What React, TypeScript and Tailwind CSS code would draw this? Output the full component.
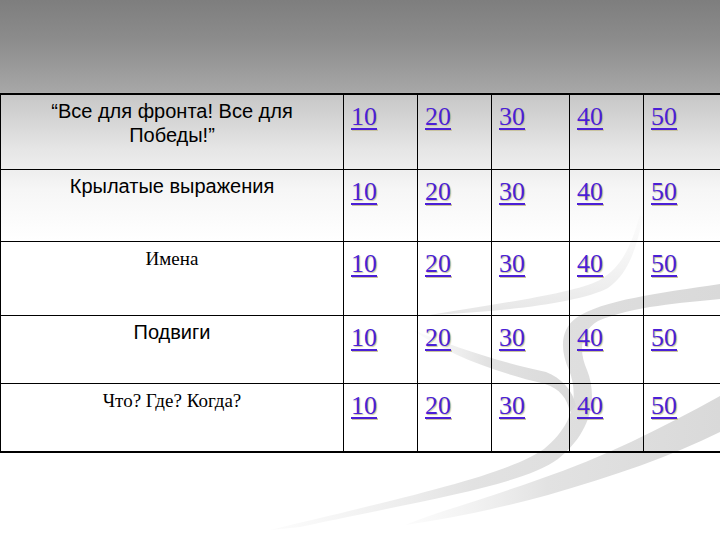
import React from 'react';

// Quiz board slide: category column plus five point-value links per row.
const rows = [
  { label: '“Все для фронта! Все для Победы!”', font: 'sans' },
  { label: 'Крылатые выражения', font: 'sans' },
  { label: 'Имена', font: 'serif' },
  { label: 'Подвиги', font: 'sans' },
  { label: 'Что? Где? Когда?', font: 'serif' },
];

const points = [10, 20, 30, 40, 50];
const heights = ['h-[75px]', 'h-[72px]', 'h-[74px]', 'h-[68px]', 'h-[69px]'];

function Swoosh() {
  // Template decoration in the lower right — pale grey ribbons.
  return (
    <svg
      aria-hidden
      className="absolute inset-0 pointer-events-none"
      width="720"
      height="540"
      viewBox="0 0 720 540"
    >
      <defs>
        <linearGradient id="rib" x1="0" y1="0" x2="1" y2="0">
          <stop offset="0" stopColor="#eeeeee" stopOpacity="0.2" />
          <stop offset="0.45" stopColor="#e2e2e2" />
          <stop offset="1" stopColor="#d9d9d9" />
        </linearGradient>
        <linearGradient id="thin" x1="0" y1="1" x2="0" y2="0">
          <stop offset="0" stopColor="#e6e6e6" />
          <stop offset="1" stopColor="#f4f4f4" stopOpacity="0.3" />
        </linearGradient>
      </defs>
      <path
        d="M430,315 C500,303 572,294 600,280 C620,268 630,250 640,215 L643,217 C636,250 628,274 608,288 C580,303 500,312 430,315 Z"
        fill="url(#thin)"
      />
      <path
        d="M720,284 C660,293 602,300 576,318 C560,330 560,350 569,370 C579,395 574,425 544,449 C508,474 420,494 270,530 L300,527 C430,499 522,485 558,459 C594,430 597,395 587,370 C578,350 581,331 598,321 C633,306 682,303 720,299 Z"
        fill="url(#rib)"
      />
      <path
        d="M413,330 C445,352 486,370 545,384 C560,389 567,398 570,412 L576,406 C573,390 561,378 546,372 C492,360 452,346 413,330 Z"
        fill="url(#rib)"
      />
      <path
        d="M720,396 C662,428 602,458 540,479 C490,497 440,511 405,525 C452,518 502,508 548,495 C614,476 672,456 720,432 Z"
        fill="url(#rib)"
      />
    </svg>
  );
}

export default function App() {
  return (
    <div className="relative w-[720px] h-[540px] overflow-hidden bg-[linear-gradient(180deg,#7e7e7e_0px,#8c8c8c_40px,#a7a7a7_92px,#c7c7c7_95px,#e6e6e6_150px,#f6f6f6_190px,#ffffff_240px)]">
      <Swoosh />
      <div className="relative pt-[93px]">
        <table className="w-[720px] border-collapse table-fixed border-y-2 border-black">
          <colgroup>
            <col className="w-[343px]" />
            <col className="w-[74px]" />
            <col className="w-[74px]" />
            <col className="w-[78px]" />
            <col className="w-[74px]" />
            <col className="w-[77px]" />
          </colgroup>
          <tbody>
            {rows.map((row, i) => (
              <tr key={row.label} className={heights[i]}>
                <td
                  className={
                    row.font === 'sans'
                      ? "border border-black align-top text-center px-4 pt-[4px] text-[20px] leading-[24px] text-black font-['Liberation_Sans',Arial,sans-serif]"
                      : "border border-black align-top text-center px-4 pt-[5px] text-[19px] leading-[23px] text-black font-['Liberation_Serif','Times_New_Roman',serif]"
                  }
                >
                  {row.label}
                </td>
                {points.map((p) => (
                  <td key={p} className="border border-black align-top pl-[7px] pt-[7px]">
                    <a
                      href="#"
                      className="text-[26px] leading-[30px] text-[#4b1fd6] underline decoration-2 underline-offset-[3px] font-['Liberation_Serif','Times_New_Roman',serif] [text-shadow:1px_1px_1px_#c9c3a0]"
                    >
                      {p}
                    </a>
                  </td>
                ))}
              </tr>
            ))}
          </tbody>
        </table>
      </div>
    </div>
  );
}
